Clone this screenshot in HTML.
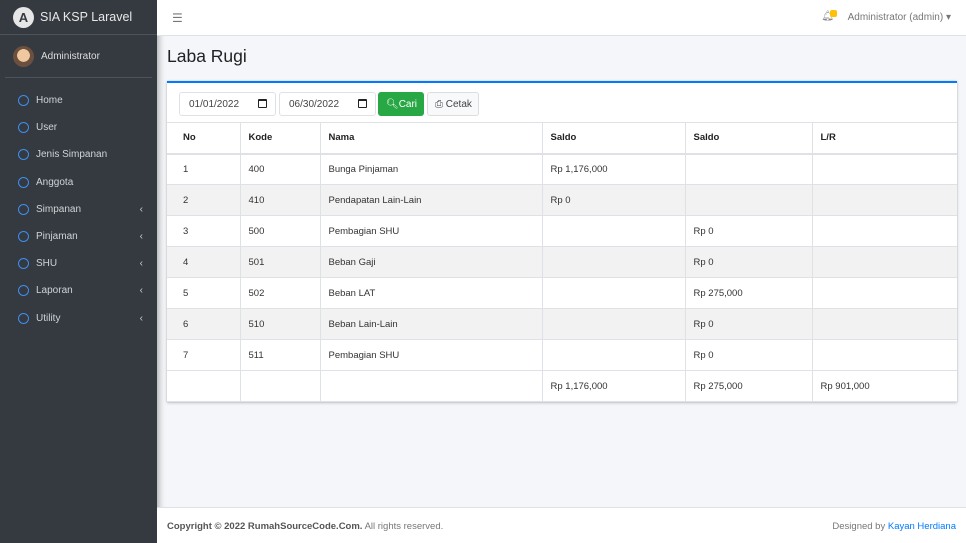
<!DOCTYPE html>
<html><head><style>
*{box-sizing:border-box;margin:0;padding:0}
body{width:966px;height:543px;overflow:hidden;font-family:"Liberation Sans",sans-serif;background:#f4f6f9;position:relative;font-size:10px;color:#212529}
.sb{position:absolute;left:0;top:0;width:157px;height:543px;background:#343a40;box-shadow:2px 0 6px rgba(0,0,0,.3)}
.brand{height:35px;border-bottom:1px solid #4b545c;display:flex;align-items:center;padding-left:13px;color:#e8e8e8;font-size:12.5px}
.logo{width:21px;height:21px;border-radius:50%;background:#e6e6e6;margin-right:6px;display:flex;align-items:center;justify-content:center;color:#343a40;font-weight:bold;font-size:13px}
.user{height:43px;margin:0 5px;border-bottom:1px solid #4b545c;display:flex;align-items:center;padding-left:8px;color:#ddd;font-size:10px}
.av{width:21px;height:21px;border-radius:50%;background:radial-gradient(circle at 50% 45%,#f0c8a0 40%,#6b5040 42%);margin-right:7px}
.nav{position:absolute;top:87px;left:0;width:157px}
.nav div{height:27.2px;display:flex;align-items:center;padding-left:18px;color:#d0d4d8;font-size:10px;position:relative}
.nav i{width:11px;height:11px;border:1.6px solid #3f8ef0;border-radius:50%;margin-right:7px}
.nav b{position:absolute;right:14px;font-weight:normal;color:#ccc;font-size:10px}
.top{position:absolute;left:157px;top:0;right:0;height:36px;background:#fff;border-bottom:1px solid #dee2e6}
.ham{position:absolute;left:15px;top:11px;color:#777;font-size:12px}
.adm{position:absolute;right:15px;top:12px;color:#777;font-size:10px}
.bell{position:absolute;right:132px;top:11px;color:#888;font-size:10px}
.badge{position:absolute;right:129px;top:10px;width:7px;height:7px;background:#ffc107;border-radius:2px}
h1{position:absolute;left:167px;top:46px;font-weight:normal;font-size:17.5px;color:#222}
.card{position:absolute;left:167px;top:81px;width:790px;height:321px;background:#fff;border-top:2.5px solid #007bff;box-shadow:0 0 1px rgba(0,0,0,.2),0 1px 3px rgba(0,0,0,.2)}
.inp{position:absolute;top:9px;height:24px;width:97px;border:1px solid #dee2e6;border-radius:3px;font-size:10px;color:#444;padding:6px 0 0 9px}
.inp span{position:absolute;right:8px;top:6px;width:9px;height:9px;border:1.5px solid #222;border-top-width:2.5px;border-radius:1px}
.btn{position:absolute;top:9px;height:24px;border-radius:3px;font-size:10px;padding:6px 0 0 7px}
table{position:absolute;top:39px;left:0;width:790px;border-collapse:collapse}
td,th{border:1px solid #dee2e6;height:31px;padding-left:8px;text-align:left;font-size:9.5px;color:#333}
th{font-weight:bold;border-bottom:2px solid #dee2e6;color:#222}
tr:nth-child(odd) td{background:#f2f2f2}
tr.t td{background:#fff}
table tr td:first-child,table tr th:first-child{border-left:none;padding-left:16px}
table tr td:last-child,table tr th:last-child{border-right:none}
.foot{position:absolute;left:157px;top:507px;right:0;height:36px;background:#fff;border-top:1px solid #dee2e6;font-size:9.5px;color:#777}
</style></head><body>
<div class="sb">
<div class="brand"><div class="logo">A</div>SIA KSP Laravel</div>
<div class="user"><div class="av"></div>Administrator</div>
<div class="nav">
<div><i></i>Home</div><div><i></i>User</div><div><i></i>Jenis Simpanan</div><div><i></i>Anggota</div>
<div><i></i>Simpanan<b>‹</b></div><div><i></i>Pinjaman<b>‹</b></div><div><i></i>SHU<b>‹</b></div><div><i></i>Laporan<b>‹</b></div><div><i></i>Utility<b>‹</b></div>
</div></div>
<div class="top"><div class="ham">☰</div><div class="bell">🔔︎</div><div class="badge"></div><div class="adm">Administrator (admin) ▾</div></div>
<h1>Laba Rugi</h1>
<div class="card">
<div class="inp" style="left:12px">01/01/2022<span></span></div>
<div class="inp" style="left:112px">06/30/2022<span></span></div>
<div class="btn" style="left:211px;width:46px;background:#28a745;color:#fff;border:1px solid #28a745">&#x1F50D;&#xFE0E;Cari</div>
<div class="btn" style="left:260px;width:52px;background:#f8f9fa;border:1px solid #ddd;color:#444">⎙ Cetak</div>
<table>
<tr><th style="width:73px">No</th><th style="width:80px">Kode</th><th style="width:222px">Nama</th><th style="width:143px">Saldo</th><th style="width:127px">Saldo</th><th>L/R</th></tr>
<tr><td>1</td><td>400</td><td>Bunga Pinjaman</td><td>Rp 1,176,000</td><td></td><td></td></tr>
<tr><td>2</td><td>410</td><td>Pendapatan Lain-Lain</td><td>Rp 0</td><td></td><td></td></tr>
<tr><td>3</td><td>500</td><td>Pembagian SHU</td><td></td><td>Rp 0</td><td></td></tr>
<tr><td>4</td><td>501</td><td>Beban Gaji</td><td></td><td>Rp 0</td><td></td></tr>
<tr><td>5</td><td>502</td><td>Beban LAT</td><td></td><td>Rp 275,000</td><td></td></tr>
<tr><td>6</td><td>510</td><td>Beban Lain-Lain</td><td></td><td>Rp 0</td><td></td></tr>
<tr><td>7</td><td>511</td><td>Pembagian SHU</td><td></td><td>Rp 0</td><td></td></tr>
<tr class="t"><td></td><td></td><td></td><td>Rp 1,176,000</td><td>Rp 275,000</td><td>Rp 901,000</td></tr>
</table></div>
<div class="foot"><div style="position:absolute;left:10px;top:13px"><b style="color:#555">Copyright © 2022 RumahSourceCode.Com.</b> All rights reserved.</div><div style="position:absolute;right:10px;top:13px">Designed by <span style="color:#007bff">Kayan Herdiana</span></div></div>
</body></html>
